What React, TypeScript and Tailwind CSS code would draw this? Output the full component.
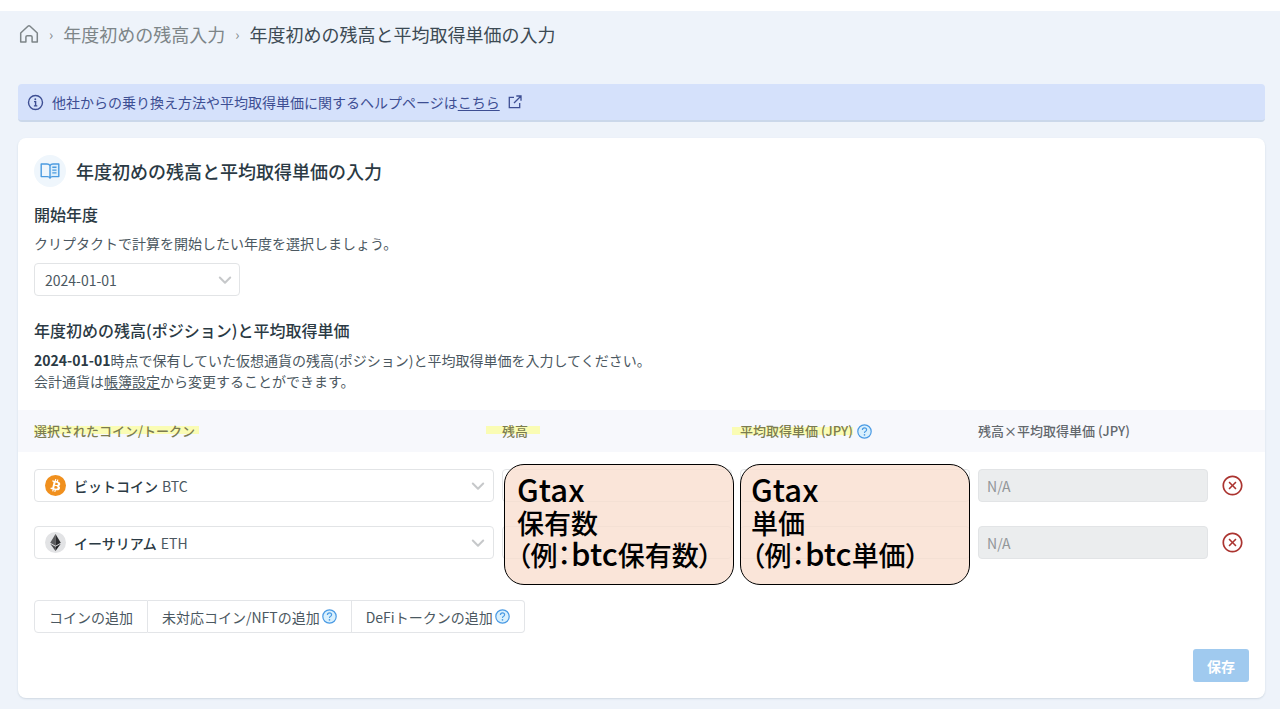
import React from "react"
import { AiOutlineCloseCircle } from "react-icons/ai"

const years = ["2024-01-01", "2023-01-01", "2022-01-01"]

const coins = [
  { id: "btc", name: "ビットコイン", symbol: "BTC", icon: <BtcIcon /> },
  { id: "eth", name: "イーサリアム", symbol: "ETH", icon: <EthIcon /> },
]

function HomeIcon() {
  return (
    <svg width="20" height="20" viewBox="0 0 20 20" fill="none" stroke="currentColor" strokeWidth="1.5" strokeLinejoin="round">
      <path d="M1.7 9 8.900 2.200q1.100-1 2.200 0L18.300 9v9.100h-5.200v-5q0-1.400-1.400-1.400H8.300q-1.400 0-1.400 1.400v5H1.700z" />
    </svg>
  )
}

function BookIcon() {
  return (
    <svg width="20" height="18" viewBox="0 0 20 18" fill="none" stroke="#4b9be0" strokeWidth="1.4">
      <path d="M10 3.2h8.3v11.6H10z" fill="#dceefb" stroke="none" />
      <path d="M10 3.6Q9.2 2 7 2H1.2v12.6h6.3q1.8 0 2.5 1.2.7-1.2 2.5-1.2h6.3V2H13q-2.2 0-3 1.6v13.2" strokeLinejoin="round" />
      <path d="M12.3 5.3h4.2M12.3 8.1h4.2M12.3 10.900h4.2" strokeWidth="1.4" />
    </svg>
  )
}

function InfoIcon() {
  return (
    <svg width="17" height="17" viewBox="0 0 17 17" fill="none" stroke="currentColor" strokeWidth="1.4">
      <circle cx="8.500" cy="8.500" r="7" />
      <circle cx="8.300" cy="5.300" r=".95" fill="currentColor" stroke="none" />
      <path d="M7 7.600h1.600v4.300M6.900 11.900h3.400" />
    </svg>
  )
}

function ExternalIcon() {
  return (
    <svg width="14" height="14" viewBox="0 0 14 14" fill="none" stroke="currentColor" strokeWidth="1.3">
      <path d="M6 2.300H1.300v10.400h10.400V8M8.300 1H13v4.700M12.800 1.200 6 8" />
    </svg>
  )
}

function Chevron({ className }: { className: string }) {
  return (
    <svg
      width="14"
      height="14"
      viewBox="0 0 14 14"
      fill="none"
      stroke="#c6c8ca"
      strokeWidth="2"
      strokeLinecap="round"
      strokeLinejoin="round"
      className={className}
    >
      <path d="m1.800 4.500 5.200 5.200 5.200-5.200" />
    </svg>
  )
}

function BtcIcon() {
  return (
    <svg width="21" height="21" viewBox="0 0 32 32">
      <circle cx="16" cy="16" r="16" fill="#f0901e" />
      <path
        fill="#fff"
        d="M23.19 14.02c.31-2.1-1.29-3.23-3.47-3.98l.7-2.84-1.72-.43-.69 2.76c-.45-.11-.92-.22-1.38-.32l.69-2.78-1.73-.43-.7 2.84c-.38-.09-.75-.17-1.1-.26l-2.39-.6-.46 1.85s1.28.3 1.26.31c.7.18.83.64.8 1.01l-.8 3.24c.05.01.11.03.18.06l-.18-.05-1.13 4.53c-.09.21-.3.53-.79.41.02.03-1.26-.31-1.26-.31l-.86 1.98 2.25.56c.42.11.83.22 1.23.32l-.72 2.87 1.73.43.71-2.84c.47.13.93.25 1.38.36l-.71 2.83 1.73.43.72-2.87c2.95.56 5.17.33 6.1-2.33.75-2.15-.04-3.39-1.59-4.19 1.13-.26 1.98-1 2.2-2.56zm-3.95 5.54c-.53 2.15-4.15.99-5.32.7l.95-3.81c1.17.29 4.93.87 4.37 3.11zm.54-5.57c-.49 1.95-3.5.96-4.48.72l.86-3.46c.98.24 4.13.7 3.62 2.74z"
      />
    </svg>
  )
}

function EthIcon() {
  return (
    <svg width="21" height="21" viewBox="0 0 32 32">
      <circle cx="16" cy="16" r="16" fill="#e2e3e5" />
      <path fill="#5b5c5e" d="M16 3 8 16.200l8 4.600z" />
      <path fill="#2c2d2f" d="m16 3 8 13.200-8 4.600z" />
      <path fill="#4a4b4d" d="m16 22.400-8-4.600 8 11z" />
      <path fill="#1f2022" d="m16 22.400 8-4.600-8 11z" />
    </svg>
  )
}

function HelpIcon() {
  return (
    <svg width="15" height="15" viewBox="0 0 15 15" fill="none" stroke="#4a9ae4" strokeWidth="1.2" className="shrink-0">
      <circle cx="7.500" cy="7.500" r="6.700" fill="#d9f0fd" />
      <path d="M5.400 6q0-2.100 2.100-2.100T9.600 5.800q0 1.200-1.300 1.700-.8.300-.8 1.400" />
      <circle cx="7.500" cy="10.800" r=".85" fill="#4a9ae4" stroke="none" />
    </svg>
  )
}

function Mark({ children, className = "" }: { children: React.ReactNode; className?: string }) {
  return (
    <span
      className={`bg-[linear-gradient(#fafcb4,#fafcb4)] bg-[length:100%_8px] bg-center bg-no-repeat text-[#7c7c50] ${className}`}
    >
      {children}
    </span>
  )
}

function Note({ children, className }: { children: React.ReactNode; className: string }) {
  return (
    <div
      className={`absolute top-3 z-10 h-[121px] rounded-[20px] border border-black bg-[#f9decf]/80 pt-2.5 text-[27px] leading-8 font-medium whitespace-nowrap text-black [font-feature-settings:'palt'] ${className}`}
    >
      {children}
    </div>
  )
}

const Latin = ({ children }: { children: string }) => <span className="text-[31px] leading-5">{children}</span>

const field = "block h-[33px] w-full rounded border border-[#e2e4e6] px-2 text-sm"
const addButton = "flex h-[33px] items-center gap-0.5 border border-[#e3e5e8] px-3.5"
const cell = "relative px-1 pt-[17px] pb-[7px]"

export default function App() {
  return (
    <div
      lang="ja"
      className="bg-white py-[11px] font-['Noto_Sans_CJK_JP','Noto_Sans',sans-serif] text-sm text-[#4b5861]"
    >
      <div className="bg-[#eef3fa] pr-[15px] pb-[11px] pl-[18px]">
        <nav className="flex h-[46px] items-center gap-2.5 text-lg text-[#7d8588]">
          <a href="#home" aria-label="ホーム" className="ml-px">
            <HomeIcon />
          </a>
          <span className="text-sm">›</span>
          <a href="#balance">年度初めの残高入力</a>
          <span className="text-sm">›</span>
          <span className="text-[#3c4a54]">年度初めの残高と平均取得単価の入力</span>
        </nav>

        <div className="mt-[27px] flex h-[38px] items-center gap-2 rounded border-b-2 border-[#cbd8ea] bg-[#d5e1fb] px-[9px] text-[#3d4e93]">
          <InfoIcon />
          <p>
            他社からの乗り換え方法や平均取得単価に関するヘルプページは
            <a href="#help" className="underline underline-offset-2">
              こちら
            </a>
          </p>
          <ExternalIcon />
        </div>

        <main className="mt-4 rounded-lg bg-white pb-4 shadow-[0_1px_2px_#cfd8e2]">
          <div className="px-4 pt-[17px]">
            <h1 className="flex items-center gap-2.5 text-lg leading-8 font-medium text-[#2b3a44]">
              <span className="flex size-8 items-center justify-center rounded-full bg-[#eff6fc]">
                <BookIcon />
              </span>
              年度初めの残高と平均取得単価の入力
            </h1>

            <h2 className="mt-[15px] text-base leading-6 font-medium text-[#2b3a44]">開始年度</h2>
            <p className="mt-[7px] leading-5">
              <label htmlFor="year">クリプタクトで計算を開始したい年度を選択しましょう。</label>
            </p>
            <div className="relative mt-2.5 w-[206px]">
              <select id="year" className={`${field} appearance-none bg-white px-2.5`}>
                {years.map((year) => (
                  <option key={year}>{year}</option>
                ))}
              </select>
              <Chevron className="pointer-events-none absolute top-2.5 right-2" />
            </div>

            <h2 className="mt-[22px] text-base leading-6 font-medium text-[#2b3a44]">
              年度初めの残高(ポジション)と平均取得単価
            </h2>
            <p className="mt-2 leading-[21px]">
              <b className="text-[#2b3a44]">2024-01-01</b>
              時点で保有していた仮想通貨の残高(ポジション)と平均取得単価を入力してください。
              <br />
              会計通貨は
              <a href="#settings" className="underline underline-offset-2">
                帳簿設定
              </a>
              から変更することができます。
            </p>
          </div>

          <table className="mt-[18px] w-full table-fixed">
            <colgroup>
              <col className="w-[38.5%]" />
              <col />
              <col />
              <col />
              <col className="w-[53px]" />
            </colgroup>
            <thead>
              <tr className="h-[42px] bg-[#f7f8fc] text-left text-[13px] text-[#62676c]">
                <th className="pl-4 font-medium">
                  <Mark className="pr-1">選択されたコイン/トークン</Mark>
                </th>
                <th className="font-medium">
                  <Mark className="-ml-3 pr-3 pl-4">残高</Mark>
                </th>
                <th className="font-medium">
                  <span className="flex items-center gap-1">
                    <Mark className="-ml-1 pl-2">平均取得単価 (JPY)</Mark>
                    <HelpIcon />
                  </span>
                </th>
                <th className="pl-1 font-medium">残高×平均取得単価 (JPY)</th>
                <th aria-label="削除" />
              </tr>
            </thead>
            <tbody>
              {coins.map((coin, idx) => (
                <tr key={coin.id}>
                  <td className="pt-[17px] pr-1 pb-[7px] pl-4">
                    <div className="relative flex h-[33px] items-center rounded border border-[#e2e4e6] px-2.5">
                      {coin.icon}
                      <span className="ml-2 font-medium text-[#2b3a44]">{coin.name}</span>
                      <span className="ml-1">{coin.symbol}</span>
                      <Chevron className="-mr-0.5 ml-auto" />
                      <select
                        aria-label="コイン"
                        defaultValue={coin.id}
                        className="absolute inset-0 w-full opacity-0"
                      >
                        {coins.map((option) => (
                          <option key={option.id} value={option.id}>
                            {option.name} {option.symbol}
                          </option>
                        ))}
                      </select>
                    </div>
                  </td>
                  <td className={cell}>
                    <input aria-label="残高" className={field} />
                    {idx === 0 && (
                      <Note className="right-0.5 left-1.5 px-3">
                        <p>
                          <Latin>Gtax</Latin>
                        </p>
                        <p>保有数</p>
                        <p>
                          （例：<Latin>btc</Latin>保有数）
                        </p>
                      </Note>
                    )}
                  </td>
                  <td className={cell}>
                    <input aria-label="平均取得単価" className={field} />
                    {idx === 0 && (
                      <Note className="right-1 left-1 px-2.5">
                        <p>
                          <Latin>Gtax</Latin>
                        </p>
                        <p>単価</p>
                        <p>
                          （例：<Latin>btc</Latin>単価）
                        </p>
                      </Note>
                    )}
                  </td>
                  <td className={cell}>
                    <input
                      aria-label="残高×平均取得単価"
                      value="N/A"
                      disabled
                      className={`${field} bg-[#ebedee] text-[#929699]`}
                    />
                  </td>
                  <td className="pt-[17px] pb-[7px] pl-[9px]">
                    <button type="button" aria-label="削除" className="block text-[#ab3430]">
                      <AiOutlineCloseCircle size={23} />
                    </button>
                  </td>
                </tr>
              ))}
            </tbody>
          </table>

          <div className="px-4 pt-[34px]">
            <div className="flex">
              <button type="button" className={`${addButton} rounded-l`}>
                コインの追加
              </button>
              <button type="button" className={`${addButton} border-l-0`}>
                未対応コイン/NFTの追加
                <HelpIcon />
              </button>
              <button type="button" className={`${addButton} rounded-r border-l-0`}>
                DeFiトークンの追加
                <HelpIcon />
              </button>
            </div>
            <div className="mt-4 flex justify-end">
              <button type="button" className="h-[33px] rounded-[3px] bg-[#a0caef] px-3.5 font-bold text-white">
                保存
              </button>
            </div>
          </div>
        </main>
      </div>
    </div>
  )
}
